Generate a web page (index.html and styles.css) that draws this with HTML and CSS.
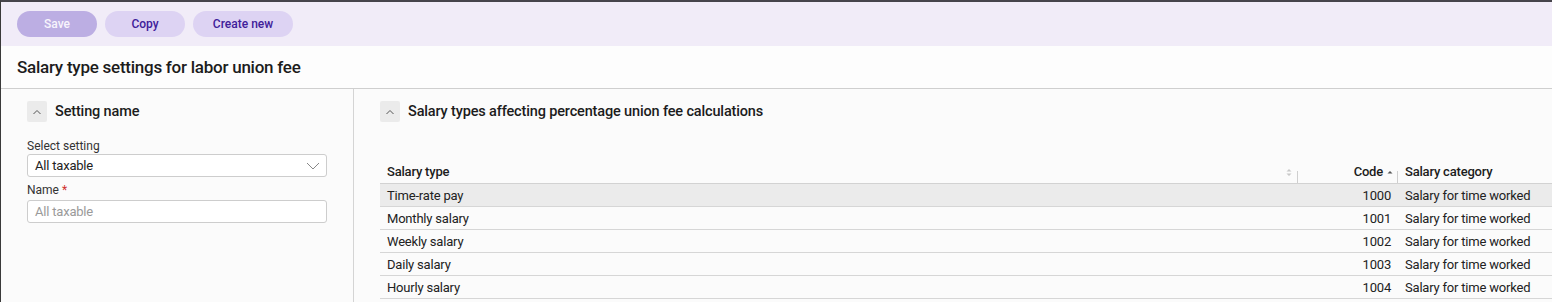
FILE: index.html
```html
<!DOCTYPE html>
<html lang="en">
<head>
<meta charset="utf-8">
<title>Salary type settings for labor union fee</title>
<link rel="stylesheet" href="styles.css">
</head>
<body>
<div class="app">
  <div class="toolbar">
    <button class="btn btn-disabled btn-w80">Save</button>
    <button class="btn btn-w80">Copy</button>
    <button class="btn btn-w100">Create new</button>
  </div>
  <div class="page-title">Salary type settings for labor union fee</div>
  <div class="main">
    <div class="left-panel">
      <div class="section-head">
        <span class="collapse-btn"><svg width="10" height="6" viewBox="0 0 10 6"><path d="M1.5 5 L5 1.5 L8.5 5" fill="none" stroke="#555" stroke-width="1"/></svg></span>
        <span class="section-title">Setting name</span>
      </div>
      <div class="field-label first">Select setting</div>
      <div class="select-box">
        <span>All taxable</span>
        <svg class="chev" width="14" height="8" viewBox="0 0 14 8"><path d="M1 1 L7 7 L13 1" fill="none" stroke="#888" stroke-width="1"/></svg>
      </div>
      <div class="field-label">Name <span class="req">*</span></div>
      <div class="input-box placeholder">All taxable</div>
    </div>
    <div class="right-panel">
      <div class="section-head">
        <span class="collapse-btn"><svg width="10" height="6" viewBox="0 0 10 6"><path d="M1.5 5 L5 1.5 L8.5 5" fill="none" stroke="#555" stroke-width="1"/></svg></span>
        <span class="section-title">Salary types affecting percentage union fee calculations</span>
      </div>
      <table class="grid">
        <colgroup>
          <col class="c1"><col class="c2"><col class="c3">
        </colgroup>
        <thead>
          <tr>
            <th class="th-type"><span>Salary type</span><span class="sort-both"><svg width="6" height="9" viewBox="0 0 6 9"><path d="M0.5 3.5 L3 1 L5.5 3.5 Z M0.5 5.5 L3 8 L5.5 5.5 Z" fill="#c8c8c8"/></svg></span><span class="divider"></span></th>
            <th class="th-code"><span>Code</span><span class="sort-asc"><svg width="6" height="4" viewBox="0 0 6 4"><path d="M0.5 3.5 L3 1 L5.5 3.5 Z" fill="#555"/></svg></span><span class="divider"></span></th>
            <th class="th-cat">Salary category</th>
          </tr>
        </thead>
        <tbody>
          <tr class="hl"><td>Time-rate pay</td><td class="num">1000</td><td>Salary for time worked</td></tr>
          <tr><td>Monthly salary</td><td class="num">1001</td><td>Salary for time worked</td></tr>
          <tr><td>Weekly salary</td><td class="num">1002</td><td>Salary for time worked</td></tr>
          <tr><td>Daily salary</td><td class="num">1003</td><td>Salary for time worked</td></tr>
          <tr><td>Hourly salary</td><td class="num">1004</td><td>Salary for time worked</td></tr>
        </tbody>
      </table>
    </div>
  </div>
</div>
</body>
</html>
```

FILE: styles.css
```css
html, body {
  margin: 0;
  padding: 0;
  height: 100%;
  overflow: hidden;
}
body {
  font-family: Roboto, "Liberation Sans", sans-serif;
  color: #222;
  background: #fafafa;
}
.app {
  height: 100%;
  border-top: 2px solid #47454c;
  border-left: 1px solid #3a3a3a;
  box-sizing: border-box;
  background: #fbfbfb;
}
.toolbar {
  height: 44px;
  background: #f1ecf8;
  display: flex;
  align-items: flex-start;
  gap: 8px;
  padding: 9px 0 0 16px;
  box-sizing: border-box;
  box-shadow: 0 1px 2px rgba(0,0,0,0.06);
}
.btn {
  height: 26px;
  border: none;
  border-radius: 13px;
  background: #ddd3f3;
  color: #40209a;
  font-family: inherit;
  font-size: 12px;
  font-weight: 500;
  padding: 0;
}
.btn-w80 { width: 80px; }
.btn-w100 { width: 100px; }
.btn-disabled {
  background: #bcaee3;
  color: #f7f4fc;
}
.page-title {
  height: 42px;
  display: flex;
  align-items: center;
  padding-left: 16px;
  font-size: 17px;
  letter-spacing: -0.25px;
  font-weight: 500;
  color: #1c1c1c;
  border-bottom: 1px solid #cfcfcf;
  background: #fdfdfd;
}
.main {
  display: grid;
  grid-template-columns: 353px 1fr;
  height: calc(100% - 87px);
}
.left-panel {
  border-right: 1px solid #d4d4d4;
  padding: 12px 0 0 26px;
}
.right-panel {
  padding: 12px 0 0 26px;
  overflow: hidden;
}
.section-head {
  display: flex;
  align-items: center;
  height: 21px;
}
.collapse-btn {
  width: 20px;
  height: 21px;
  background: #ebebeb;
  border-radius: 2px;
  display: flex;
  align-items: center;
  justify-content: center;
}
.section-title {
  margin-left: 8px;
  font-size: 14.5px;
  letter-spacing: -0.15px;
  font-weight: 500;
  color: #1c1c1c;
}
.field-label {
  font-size: 12px;
  line-height: 16px;
  color: #333;
  margin-top: 5px;
  margin-bottom: 2px;
}
.field-label.first {
  margin-top: 16px;
  margin-bottom: 0;
}
.req { color: #d0302f; }
.select-box, .input-box {
  width: 300px;
  height: 23px;
  box-sizing: border-box;
  border: 1px solid #cdcdcd;
  border-radius: 3px;
  background: #fff;
  font-size: 13px;
  letter-spacing: -0.2px;
  padding-left: 7px;
  display: flex;
  align-items: center;
}
.select-box { justify-content: space-between; padding-right: 6px; color: #222; }
.placeholder { color: #9a9a9a; }
.grid {
  margin-top: 38px;
  border-collapse: collapse;
  table-layout: fixed;
  width: 1260px;
  font-size: 13px;
  letter-spacing: -0.2px;
}
.grid col.c1 { width: 918px; }
.grid col.c2 { width: 100px; }
.grid col.c3 { width: 242px; }
.grid th {
  height: 23px;
  padding: 0 7px;
  font-weight: 500;
  text-align: left;
  border-bottom: 1px solid #d2d2d2;
  position: relative;
  color: #1c1c1c;
}
.grid th.th-code { text-align: right; padding-right: 5px; }
.grid .divider {
  position: absolute;
  right: 0;
  bottom: 0;
  width: 1px;
  height: 12px;
  background: #cfcfcf;
}
.sort-both {
  position: absolute;
  right: 6px;
  top: 8px;
  line-height: 0;
}
.sort-asc {
  display: inline-block;
  margin-left: 4px;
  vertical-align: 2px;
  line-height: 0;
}
.grid td {
  height: 22px;
  padding: 0 7px;
  border-bottom: 1px solid #d6d6d6;
  color: #222;
  white-space: nowrap;
}
.grid td.num { text-align: right; }
.grid tr.hl td { background: #ebebeb; }
```
